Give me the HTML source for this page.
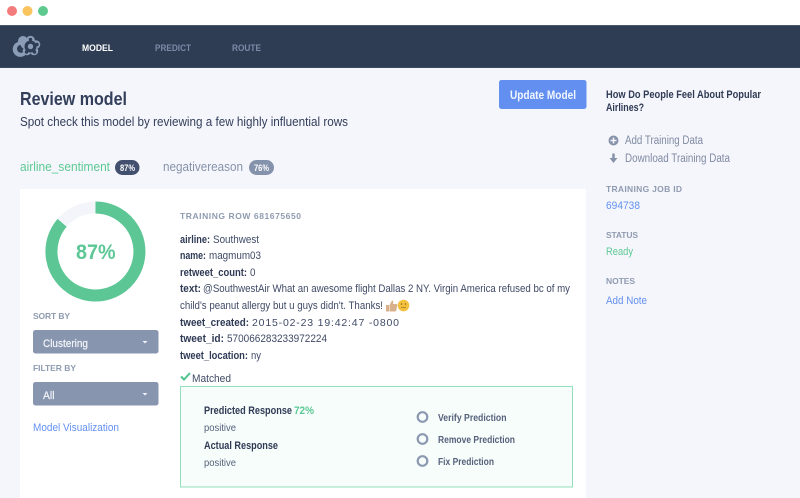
<!DOCTYPE html>
<html><head><meta charset="utf-8"><style>
html,body{margin:0;padding:0;width:800px;height:498px;overflow:hidden;background:#f5f6fb}
svg{display:block;filter:blur(.3px)}
text{font-family:"Liberation Sans",sans-serif;font-size:11px;fill:#3a4560}
.b{font-weight:bold}
.h{font-size:8.5px;font-weight:bold;fill:#8f9bb0}
.r{font-size:11px;fill:#3f4a66}
.l{font-size:11px;font-weight:bold;fill:#2f3a55}
.g{font-size:11.5px;fill:#7f8aa3}
.a{fill:#6390f0}
.o{font-size:10px;font-weight:bold;fill:#55617c}
.s{font-size:11px;fill:#f4f6fa;stroke:#f4f6fa;stroke-width:.2px}
.n{font-size:9.500px;font-weight:bold;fill:#7d8aa8}
.p{font-size:10px;fill:#55617c}
</style></head><body>
<svg width="800" height="498" viewBox="0 0 800 498" xmlns="http://www.w3.org/2000/svg">
<rect width="800" height="498" fill="#f5f6fb"/>
<rect width="800" height="25" fill="#fff"/>
<circle cx="12" cy="11" r="5" fill="#f47b7b"/><circle cx="27.500" cy="11" r="5" fill="#fac55e"/><circle cx="43" cy="11" r="5" fill="#5dc98f"/>
<rect y="25" width="800" height="43" fill="#2e3d54"/>
<rect y="25" width="800" height="1" fill="#4a586e"/>
<rect y="67" width="800" height="1" fill="#3d4b62"/>
<g fill="#8b9cb6">
<path d="M20.500 41.500A7.700 7.700 0 1 0 26 54.500L24 51.500A4 4 0 1 1 21 44.800L24 44Z"/>
<circle cx="23" cy="41" r="5"/>
<circle cx="30.500" cy="40" r="4.300"/><circle cx="36" cy="44.500" r="4.300"/><circle cx="34" cy="51" r="4.300"/><circle cx="27" cy="51" r="4.300"/><circle cx="25" cy="44.500" r="4.300"/>
</g>
<circle cx="30.500" cy="46.500" r="6" fill="#2e3d54"/>
<circle cx="30.500" cy="46.500" r="2.700" fill="#8b9cb6"/>
<circle cx="30.500" cy="39.500" r="1.700" fill="#2e3d54"/><circle cx="37" cy="44.500" r="1.700" fill="#2e3d54"/><circle cx="34.500" cy="52" r="1.700" fill="#2e3d54"/><circle cx="26.500" cy="52" r="1.700" fill="#2e3d54"/>
<text x="82" y="51" class="n" style="fill:#fff" textLength="31" lengthAdjust="spacingAndGlyphs">MODEL</text>
<text x="155" y="51" class="n" textLength="36" lengthAdjust="spacingAndGlyphs">PREDICT</text>
<text x="232" y="51" class="n" textLength="29" lengthAdjust="spacingAndGlyphs">ROUTE</text>

<text x="20" y="105" class="b" style="font-size:18.500px;fill:#323e5a" textLength="107" lengthAdjust="spacingAndGlyphs">Review model</text>
<text x="20" y="126" style="font-size:13px;fill:#323e5a" textLength="328" lengthAdjust="spacingAndGlyphs">Spot check this model by reviewing a few highly influential rows</text>
<text x="20" y="171" style="font-size:13px;fill:#5cc994" textLength="90" lengthAdjust="spacingAndGlyphs">airline_sentiment</text>
<rect x="115" y="160" width="24.500" height="15" rx="7.500" fill="#424f6e"/>
<text x="120" y="171" class="b" style="font-size:9px;fill:#fff" textLength="15" lengthAdjust="spacingAndGlyphs">87%</text>
<text x="163" y="171" style="font-size:13px;fill:#8592aa" textLength="80" lengthAdjust="spacingAndGlyphs">negativereason</text>
<rect x="249" y="160" width="25" height="15" rx="7.500" fill="#8492ac"/>
<text x="254" y="171" class="b" style="font-size:9px;fill:#fff" textLength="15" lengthAdjust="spacingAndGlyphs">76%</text>

<rect x="499" y="80" width="87.500" height="29" rx="2.500" fill="#6390f0"/>
<text x="510" y="99" class="b" style="font-size:12px;fill:#f2f6ff" textLength="66" lengthAdjust="spacingAndGlyphs">Update Model</text>

<text x="606" y="98" class="b" style="font-size:11px;fill:#2f3a55" textLength="155" lengthAdjust="spacingAndGlyphs">How Do People Feel About Popular</text>
<text x="606" y="111" class="b" style="font-size:11px;fill:#2f3a55" textLength="38" lengthAdjust="spacingAndGlyphs">Airlines?</text>
<circle cx="613.500" cy="140.500" r="5" fill="#8592aa"/><path d="M613.500 137.500v6M610.500 140.500h6" stroke="#f5f6fb" stroke-width="1.500"/>
<path d="M613.500 153.500v6" stroke="#8592aa" stroke-width="2.500"/><path d="M609.500 158h8l-4 5z" fill="#8592aa"/>
<text x="625" y="144" class="g" textLength="78" lengthAdjust="spacingAndGlyphs">Add Training Data</text>
<text x="625" y="162" class="g" textLength="105" lengthAdjust="spacingAndGlyphs">Download Training Data</text>
<text x="606" y="192" class="h" textLength="76">TRAINING JOB ID</text>
<text x="606" y="209" class="a" textLength="34" lengthAdjust="spacingAndGlyphs">694738</text>
<text x="606" y="238" class="h" textLength="32">STATUS</text>
<text x="606" y="255" style="fill:#5cc994" textLength="27" lengthAdjust="spacingAndGlyphs">Ready</text>
<text x="606" y="284" class="h" textLength="29">NOTES</text>
<text x="606" y="304" class="a" textLength="41" lengthAdjust="spacingAndGlyphs">Add Note</text>

<rect x="20" y="189" width="566" height="309" fill="#fff"/>
<circle cx="95.500" cy="251.500" r="44" fill="none" stroke="#f3f5fa" stroke-width="12"/>
<path d="M95.500 207.500A44 44 0 1 1 62.100 222.800" fill="none" stroke="#5cc795" stroke-width="12"/>
<text x="76" y="259" class="b" style="font-size:21px;fill:#5cc795" textLength="39.500" lengthAdjust="spacingAndGlyphs">87%</text>

<text x="33" y="319" class="h" textLength="37">SORT BY</text>
<rect x="33" y="330" width="125.500" height="23.500" rx="2.500" fill="#8895af"/>
<text x="43" y="347" class="s" textLength="45" lengthAdjust="spacingAndGlyphs">Clustering</text>
<path d="M142.500 341h5l-2.500 2.500z" fill="#f2f4f9"/>
<text x="33" y="371" class="h" textLength="43">FILTER BY</text>
<rect x="33" y="382" width="125.500" height="23.500" rx="2.500" fill="#8895af"/>
<text x="43" y="399" class="s" textLength="11.500" lengthAdjust="spacingAndGlyphs">All</text>
<path d="M142.500 393h5l-2.500 2.500z" fill="#f2f4f9"/>
<text x="33" y="431" class="a" style="font-size:11px" textLength="86" lengthAdjust="spacingAndGlyphs">Model Visualization</text>

<text x="180" y="219" class="h" textLength="121">TRAINING ROW 681675650</text>
<text x="180" y="243" class="l" textLength="30" lengthAdjust="spacingAndGlyphs">airline:</text>
<text x="213" y="243" class="r" textLength="46" lengthAdjust="spacingAndGlyphs">Southwest</text>
<text x="180" y="259" class="l" textLength="26" lengthAdjust="spacingAndGlyphs">name:</text>
<text x="209" y="259" class="r" textLength="52" lengthAdjust="spacingAndGlyphs">magmum03</text>
<text x="180" y="276" class="l" textLength="67" lengthAdjust="spacingAndGlyphs">retweet_count:</text>
<text x="250" y="276" class="r" textLength="5.500" lengthAdjust="spacingAndGlyphs">0</text>
<text x="180" y="292" class="l" textLength="21" lengthAdjust="spacingAndGlyphs">text:</text>
<text x="203" y="292" class="r" textLength="367" lengthAdjust="spacingAndGlyphs">@SouthwestAir What an awesome flight Dallas 2 NY. Virgin America refused bc of my</text>
<text x="180" y="309" class="r" textLength="203" lengthAdjust="spacingAndGlyphs">child's peanut allergy but u guys didn't. Thanks!</text>
<path d="M386 305h3v6.500h-3zM389.500 305l2.500-4.500c1.200-.3 1.500.8 1 3.500h3.500c1 .3 1 1.500.5 2.500l-.7 4c-.3.7-.8 1-1.500 1h-5.300z" fill="#d9b08c"/>
<circle cx="403.500" cy="305.500" r="5.800" fill="#f4c13f"/>
<circle cx="401.500" cy="304" r=".8" fill="#8a6a20"/><circle cx="405.500" cy="304" r=".8" fill="#8a6a20"/><path d="M401 307.500h5" stroke="#a97c20" stroke-width=".8"/>
<text x="180" y="326" class="l" textLength="69" lengthAdjust="spacingAndGlyphs">tweet_created:</text>
<text x="252" y="326" class="r" style="font-size:10.500px" textLength="147" lengthAdjust="spacing">2015-02-23 19:42:47 -0800</text>
<text x="180" y="342" class="l" textLength="44" lengthAdjust="spacingAndGlyphs">tweet_id:</text>
<text x="227" y="342" class="r" textLength="100" lengthAdjust="spacingAndGlyphs">570066283233972224</text>
<text x="180" y="359" class="l" textLength="68" lengthAdjust="spacingAndGlyphs">tweet_location:</text>
<text x="251" y="359" class="r" textLength="10" lengthAdjust="spacingAndGlyphs">ny</text>

<path d="M181 376.500l3 3 6-6.500" fill="none" stroke="#4fc48d" stroke-width="2"/>
<text x="192" y="382" class="r" textLength="39" lengthAdjust="spacingAndGlyphs">Matched</text>
<rect x="180.500" y="386.500" width="392" height="100.500" fill="#f7fdfa" stroke="#93dfbb" stroke-width="1"/>
<text x="204" y="414" class="l" textLength="88" lengthAdjust="spacingAndGlyphs">Predicted Response</text>
<text x="294" y="414" class="b" style="font-size:11px;fill:#5cc994" textLength="20" lengthAdjust="spacingAndGlyphs">72%</text>
<text x="204" y="431" class="p" textLength="32" lengthAdjust="spacingAndGlyphs">positive</text>
<text x="204" y="449" class="l" textLength="74" lengthAdjust="spacingAndGlyphs">Actual Response</text>
<text x="204" y="466" class="p" textLength="32" lengthAdjust="spacingAndGlyphs">positive</text>
<g fill="#f7fdfa" stroke="#8a98b2" stroke-width="2.200">
<circle cx="422.500" cy="417" r="4.800"/><circle cx="422.500" cy="439" r="4.800"/><circle cx="422.500" cy="461" r="4.800"/>
</g>
<text x="438" y="421" class="o" textLength="68.500" lengthAdjust="spacingAndGlyphs">Verify Prediction</text>
<text x="438" y="443" class="o" textLength="77" lengthAdjust="spacingAndGlyphs">Remove Prediction</text>
<text x="438" y="465" class="o" textLength="56" lengthAdjust="spacingAndGlyphs">Fix Prediction</text>
</svg>
</body></html>
